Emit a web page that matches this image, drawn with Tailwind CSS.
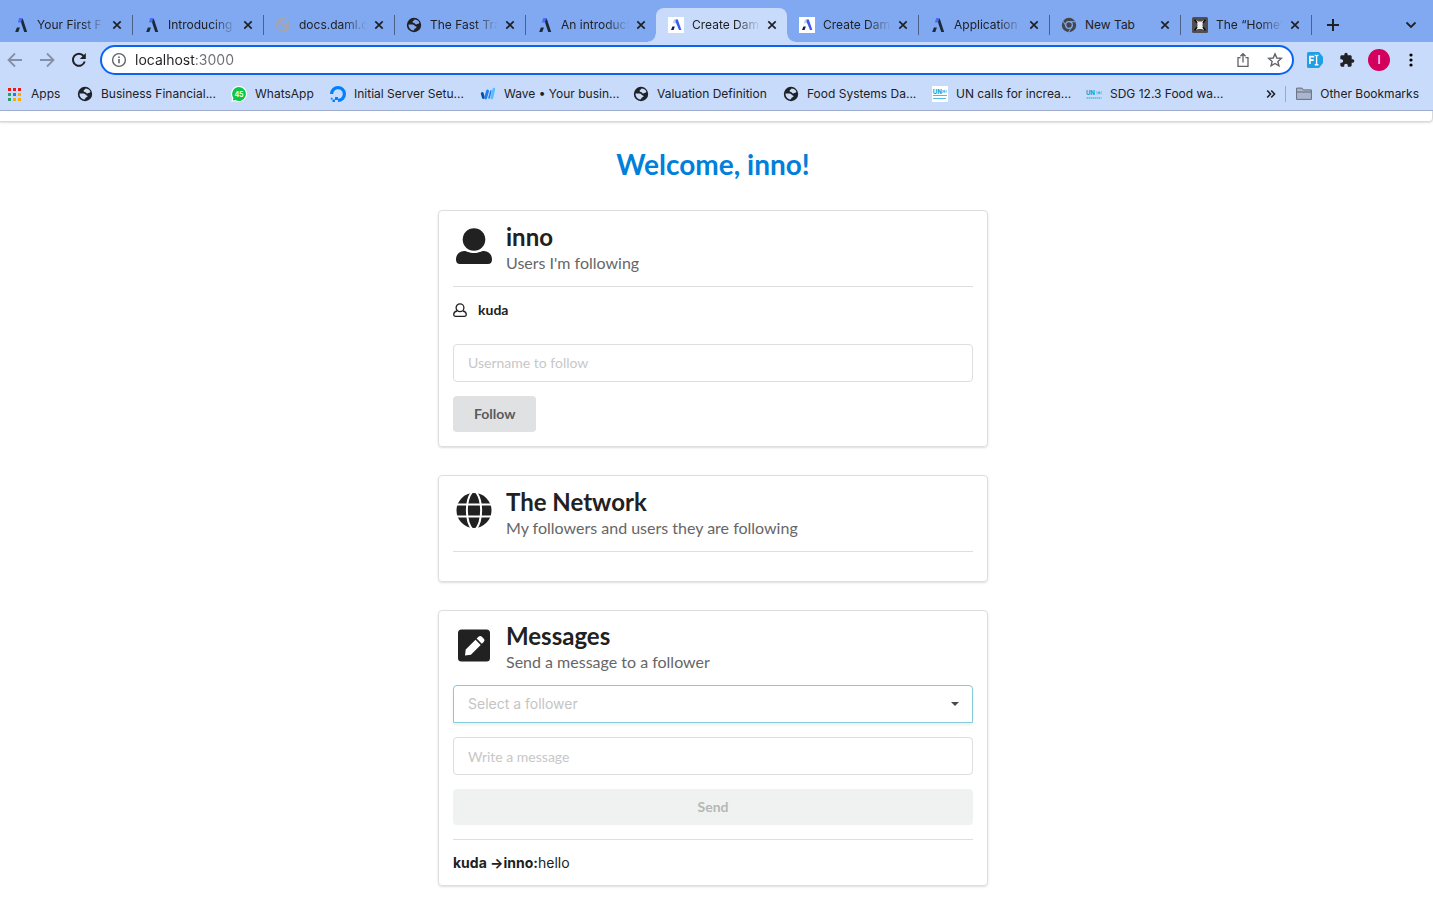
<!DOCTYPE html>
<html lang="en">
<head>
<meta charset="utf-8">
<meta name="viewport" content="width=device-width, initial-scale=1">
<title>Create Daml App</title>
<script src="https://cdn.jsdelivr.net/npm/@tailwindcss/browser@4"></script>
</head>
<body class="min-h-screen bg-white font-['Inter',sans-serif] text-[#202124]">

<svg class="hidden" xmlns="http://www.w3.org/2000/svg">
  <symbol id="close" viewBox="0 0 10 10"><path d="M1.3 1.3l7.4 7.4M8.7 1.3L1.3 8.7" fill="none" stroke="#202124" stroke-width="1.7"/></symbol>
  <symbol id="daml" viewBox="0 0 16 16"><path d="M6.200 1h3.400l1 4.600H4.900z" fill="#4a6cf5"/><path d="M8.600 3l1.200-1.200L14.200 15h-3L8.200 6z" fill="#1c2b3a"/><path d="M3.900 10.400h3L5.300 15H2.200z" fill="#1c2b3a"/></symbol>
  <symbol id="damlbox" viewBox="0 0 16 16"><path d="M0 0h16v16H0z" fill="#fff"/><path d="M6 2.600h3.400l.4 3.600H4.800z" fill="#c3cffb"/><path d="M7.600 2.600h2.200L13.400 13H11L7.700 5z" fill="#3a5cf0"/><path d="M4.400 9.600h2.400L5.600 13H3z" fill="#101d55"/></symbol>
  <symbol id="globe" viewBox="0 0 16 16"><circle cx="8" cy="8" r="7.200" fill="currentColor"/><path d="M8.600 2.500c2 0 3.700 1.100 4.700 2.700.1 1-.6 1.700-1.700 1.700-.7 0-.9.600-1.600.6-.9 0-.7-1-1.500-1.200-.9-.2-1.900-.5-1.900-1.500 0-.7.700-.8 1.200-1.200.4-.3.300-.9.800-1.100z" fill="var(--land,#81a9f1)"/><path d="M2.500 7.600c1.600-.1 3.700-.2 5 .2 1 .3 1 1.300 1.900 1.500.8.200 1.300.5 1.100 1.200-.3.900-1.600.7-2 1.500-.3.700-.4 1.400-1.300 1.500-2.700-.4-4.800-2.900-4.700-5.900z" fill="var(--land,#81a9f1)"/></symbol>
  <symbol id="folder" viewBox="0 0 16 14"><path d="M.6 1.100h5.400l1.400 1.800h8v9.500H.6z" fill="#aab6d0" stroke="#666d79"/><path d="M1 5h14" stroke="#666d79"/></symbol>
</svg>

<header>
  <!-- Tab strip -->
  <div class="flex h-[42px] items-end bg-[#81a9f1] pl-px text-xs">
    <div role="tablist" class="flex min-w-0 flex-1">
      <div role="tab" class="flex h-[34px] w-[131px] items-center pl-3">
        <svg class="size-4 shrink-0"><use href="#daml"/></svg>
        <span class="ml-2 w-[68px] whitespace-nowrap [mask-image:linear-gradient(90deg,#000_65%,transparent)]">Your First F</span>
        <button aria-label="Close tab" class="ml-[7px]"><svg class="size-2.5"><use href="#close"/></svg></button>
        <span class="-mr-px ml-auto h-5 w-px bg-[#4b6189]"></span>
      </div>
      <div role="tab" class="flex h-[34px] w-[131px] items-center pl-3">
        <svg class="size-4 shrink-0"><use href="#daml"/></svg>
        <span class="ml-2 w-[68px] whitespace-nowrap [mask-image:linear-gradient(90deg,#000_65%,transparent)]">Introducing</span>
        <button aria-label="Close tab" class="ml-[7px]"><svg class="size-2.5"><use href="#close"/></svg></button>
        <span class="-mr-px ml-auto h-5 w-px bg-[#4b6189]"></span>
      </div>
      <div role="tab" class="flex h-[34px] w-[131px] items-center pl-3">
        <svg class="size-4 shrink-0 text-[#a3a6ae]"><use href="#globe"/></svg>
        <span class="ml-2 w-[68px] whitespace-nowrap [mask-image:linear-gradient(90deg,#000_65%,transparent)]">docs.daml.c</span>
        <button aria-label="Close tab" class="ml-[7px]"><svg class="size-2.5"><use href="#close"/></svg></button>
        <span class="-mr-px ml-auto h-5 w-px bg-[#4b6189]"></span>
      </div>
      <div role="tab" class="flex h-[34px] w-[131px] items-center pl-3">
        <svg class="size-4 shrink-0"><use href="#globe"/></svg>
        <span class="ml-2 w-[68px] whitespace-nowrap [mask-image:linear-gradient(90deg,#000_65%,transparent)]">The Fast Tra</span>
        <button aria-label="Close tab" class="ml-[7px]"><svg class="size-2.5"><use href="#close"/></svg></button>
        <span class="-mr-px ml-auto h-5 w-px bg-[#4b6189]"></span>
      </div>
      <div role="tab" class="flex h-[34px] w-[131px] items-center pl-3">
        <svg class="size-4 shrink-0"><use href="#daml"/></svg>
        <span class="ml-2 w-[68px] whitespace-nowrap [mask-image:linear-gradient(90deg,#000_65%,transparent)]">An introduct</span>
        <button aria-label="Close tab" class="ml-[7px]"><svg class="size-2.5"><use href="#close"/></svg></button>
      </div>
      <div role="tab" aria-selected="true" class="relative flex h-[34px] w-[131px] items-center rounded-t-lg bg-[#c9dbfb] pl-3">
        <span class="absolute bottom-0 -left-2 size-2 bg-[radial-gradient(circle_at_0_0,transparent_7px,#c9dbfb_8px)]"></span>
        <span class="absolute -right-2 bottom-0 size-2 bg-[radial-gradient(circle_at_100%_0,transparent_7px,#c9dbfb_8px)]"></span>
        <svg class="size-4 shrink-0"><use href="#damlbox"/></svg>
        <span class="ml-2 w-[68px] whitespace-nowrap [mask-image:linear-gradient(90deg,#000_65%,transparent)]">Create Dam</span>
        <button aria-label="Close tab" class="ml-[7px]"><svg class="size-2.5"><use href="#close"/></svg></button>
      </div>
      <div role="tab" class="flex h-[34px] w-[131px] items-center pl-3">
        <svg class="size-4 shrink-0"><use href="#damlbox"/></svg>
        <span class="ml-2 w-[68px] whitespace-nowrap [mask-image:linear-gradient(90deg,#000_65%,transparent)]">Create Dam</span>
        <button aria-label="Close tab" class="ml-[7px]"><svg class="size-2.5"><use href="#close"/></svg></button>
        <span class="-mr-px ml-auto h-5 w-px bg-[#4b6189]"></span>
      </div>
      <div role="tab" class="flex h-[34px] w-[131px] items-center pl-3">
        <svg class="size-4 shrink-0"><use href="#daml"/></svg>
        <span class="ml-2 w-[68px] whitespace-nowrap [mask-image:linear-gradient(90deg,#000_65%,transparent)]">Application</span>
        <button aria-label="Close tab" class="ml-[7px]"><svg class="size-2.5"><use href="#close"/></svg></button>
        <span class="-mr-px ml-auto h-5 w-px bg-[#4b6189]"></span>
      </div>
      <div role="tab" class="flex h-[34px] w-[131px] items-center pl-3">
        <svg class="size-4 shrink-0" viewBox="0 0 16 16"><circle cx="8" cy="8" r="7.200" fill="#43474c"/><circle cx="8" cy="8" r="3.300" fill="none" stroke="#81a9f1" stroke-width="1.300"/><path d="M8 4.700h6.300M5.200 9.600L2.100 4.200M10.800 9.600l-3.100 5.400" stroke="#81a9f1" stroke-width="1"/></svg>
        <span class="ml-2 w-[68px] whitespace-nowrap">New Tab</span>
        <button aria-label="Close tab" class="ml-[7px]"><svg class="size-2.5"><use href="#close"/></svg></button>
        <span class="-mr-px ml-auto h-5 w-px bg-[#4b6189]"></span>
      </div>
      <div role="tab" class="flex h-[34px] w-[131px] items-center pl-3">
        <svg class="size-4 shrink-0" viewBox="0 0 16 16"><rect width="16" height="16" rx="1.500" fill="#4f4f51"/><path d="M4 3l2 1.500h4L12 3l-1.500 4v2L12 13l-2-1H6l-2 1 1.500-4V7z" fill="#f0f0f0"/><path d="M2.500 2.500L5 6M13.500 2.500L11 6M2.500 13.500L5 10M13.500 13.500L11 10" fill="none" stroke="#151515" stroke-width="1.600"/></svg>
        <span class="ml-2 w-[67px] whitespace-nowrap [mask-image:linear-gradient(90deg,#000_65%,transparent)]">The “Home”</span>
        <button aria-label="Close tab" class="ml-[7px]"><svg class="size-2.5"><use href="#close"/></svg></button>
        <span class="-mr-px ml-auto h-5 w-px bg-[#4b6189]"></span>
      </div>
      <button aria-label="New tab" class="ml-4 h-[34px]"><svg class="size-3" viewBox="0 0 12 12"><path d="M6 0v12M0 6h12" stroke="#202124" stroke-width="2"/></svg></button>
    </div>
    <button aria-label="Search tabs" class="mr-4 h-[34px]"><svg class="h-2 w-3" viewBox="0 0 12 8"><path d="M1.500 1.500L6 6l4.500-4.500" fill="none" stroke="#202124" stroke-width="1.800"/></svg></button>
  </div>

  <!-- Toolbar -->
  <div class="flex h-9 items-center bg-[#c9dbfb] pr-5 pl-[7px]">
    <button aria-label="Back"><svg class="size-4" viewBox="0 0 16 16"><path d="M8 1.500L1.500 8 8 14.500M1.500 8h13.500" fill="none" stroke="#858fa8" stroke-width="1.800"/></svg></button>
    <button aria-label="Forward" class="ml-4"><svg class="size-4" viewBox="0 0 16 16"><path d="M8 1.500L14.500 8 8 14.500M14.500 8H1" fill="none" stroke="#858fa8" stroke-width="1.800"/></svg></button>
    <button aria-label="Reload" class="ml-4"><svg class="size-4" viewBox="0 0 16 16"><path d="M13.700 9.500A6 6 0 1112.600 4" fill="none" stroke="#202124" stroke-width="2"/><path d="M14.800 1v6H8.800z" fill="#202124"/></svg></button>
    <div class="ml-[13px] flex h-[30px] flex-1 items-center rounded-full border-2 border-[#0b63f0] bg-white pr-[9px] pl-[9px]">
      <svg class="size-4 shrink-0" viewBox="0 0 16 16"><circle cx="8" cy="8" r="6.400" fill="none" stroke="#5f6368" stroke-width="1.400"/><path d="M8 7v4.300M8 4.500V6" stroke="#5f6368" stroke-width="1.600"/></svg>
      <input aria-label="Address" value="localhost:3000" class="ml-2 min-w-0 flex-1 bg-[linear-gradient(90deg,#202124_60px,#6a6e73_60px)] bg-clip-text text-sm text-transparent outline-none">
      <button aria-label="Share"><svg class="size-4" viewBox="0 0 16 16"><path d="M5.500 5.700H3v8.600h10V5.700h-2.500M8 10.500V2M5.400 4.300L8 1.700l2.600 2.600" fill="none" stroke="#5f6368" stroke-width="1.300"/></svg></button>
      <button aria-label="Bookmark this page" class="ml-4"><svg class="size-4" viewBox="0 0 16 16"><path d="M8 1.900l1.800 4.100 4.500.4-3.400 3 1 4.400L8 11.500l-3.900 2.300 1-4.400-3.400-3 4.500-.4z" fill="none" stroke="#5f6368" stroke-width="1.400"/></svg></button>
    </div>
    <button aria-label="Text extension" class="ml-[13px]"><svg class="size-4" viewBox="0 0 16 16"><path d="M0 1.500A1.500 1.500 0 011.500 0H12l4 5v6l-4 5H1.500A1.500 1.500 0 010 14.500z" fill="#1f9fe6"/><path d="M2.900 12V4.600h4.300M2.900 8.200h3.800" fill="none" stroke="#fff" stroke-width="1.700"/><path d="M7.700 3.200c1.200 0 1.900.4 1.900 1.200v7.200c0 .8-.7 1.200-1.900 1.200M11.500 3.200c-1.200 0-1.900.4-1.900 1.200M11.500 12.800c-1.200 0-1.900-.4-1.900-1.200" fill="none" stroke="#fff" stroke-width="1.300"/></svg></button>
    <button aria-label="Extensions" class="ml-4"><svg class="size-4" viewBox="0 0 24 24"><path d="M20.500 11H19V7c0-1.100-.9-2-2-2h-4V3.500a2.500 2.500 0 00-5 0V5H4c-1.100 0-2 .9-2 2v3.800h1.500c1.500 0 2.700 1.200 2.700 2.700S5 16.200 3.500 16.200H2V20c0 1.100.9 2 2 2h3.800v-1.500c0-1.500 1.200-2.700 2.700-2.700s2.700 1.200 2.700 2.700V22H17c1.100 0 2-.9 2-2v-4h1.500a2.500 2.500 0 000-5z" fill="#202124"/></svg></button>
    <button aria-label="Profile" class="ml-[13px] size-[22px] rounded-full bg-[#d3015b] text-xs text-white">I</button>
    <button aria-label="Menu" class="ml-[19px]"><svg class="h-4 w-1" viewBox="0 0 4 16"><circle cx="2" cy="3" r="1.600"/><circle cx="2" cy="8" r="1.600"/><circle cx="2" cy="13" r="1.600"/></svg></button>
  </div>

  <!-- Bookmarks bar -->
  <nav class="flex h-[33px] items-center border-b border-[#a3afd0] bg-[#c9dbfb] pr-3.5 pl-2 text-xs whitespace-nowrap [--land:#c9dbfb]">
    <a href="#" class="flex w-[69px] shrink-0 items-center"><svg class="mr-2.5 size-[13px]" viewBox="0 0 13 13"><path d="M0 0h3v3H0zM5 0h3v3H5zM10 0h3v3h-3z" fill="#f01818"/><path d="M0 5h3v3H0zM0 10h3v3H0z" fill="#1fa463"/><path d="M5 5h3v3H5z" fill="#1a7cf9"/><path d="M10 5h3v3h-3zM5 10h3v3H5zM10 10h3v3h-3z" fill="#f9ab00"/></svg>Apps</a>
    <a href="#" class="flex w-[154px] shrink-0 items-center"><svg class="mr-2 size-4"><use href="#globe"/></svg>Business Financial...</a>
    <a href="#" class="flex w-[99px] shrink-0 items-center"><svg class="mr-2 size-4" viewBox="0 0 16 16"><path d="M8 0a8 8 0 11-3.900 15L.3 16l.9-3.900A8 8 0 018 0z" fill="#fff"/><path d="M8 1.100a6.900 6.900 0 11-3.600 12.800l-2.600.7.600-2.700A6.900 6.900 0 018 1.100z" fill="#0ac843"/><text x="8" y="10.500" text-anchor="middle" font-size="7" font-weight="700" fill="#fff">45</text></svg>WhatsApp</a>
    <a href="#" class="flex w-[150px] shrink-0 items-center"><svg class="mr-2 size-4" viewBox="0 0 16 16"><path d="M1.600 8a6.400 6.400 0 116.400 6.400" fill="none" stroke="#0080ff" stroke-width="3.200"/><path d="M5 11h3v3H5zM2.500 13.500H5V16H2.500zM.8 11.800h1.700v1.700H.8z" fill="#0080ff"/></svg>Initial Server Setu...</a>
    <a href="#" class="flex w-[153px] shrink-0 items-center"><svg class="mr-2 size-4" viewBox="0 0 16 16" stroke-linecap="round"><path d="M2.200 7.500l1.200 4" stroke="#0a4f9e" stroke-width="2.800"/><path d="M7.600 5L5.600 12" stroke="#1c7ff2" stroke-width="2.800"/><path d="M10.900 5L9 12" stroke="#1c7ff2" stroke-width="1.600"/><path d="M13.800 3.200L11.800 12" stroke="#5bbcff" stroke-width="2.800"/></svg>Wave • Your busin...</a>
    <a href="#" class="flex w-[150px] shrink-0 items-center"><svg class="mr-2 size-4"><use href="#globe"/></svg>Valuation Definition</a>
    <a href="#" class="flex w-[149px] shrink-0 items-center"><svg class="mr-2 size-4"><use href="#globe"/></svg>Food Systems Da...</a>
    <a href="#" class="flex w-[154px] shrink-0 items-center"><svg class="mr-2 size-4" viewBox="0 0 16 16"><path d="M0 0h16v16H0z" fill="#fff"/><text x=".8" y="7.600" font-size="6" font-weight="800" fill="#16a5da">UN</text><circle cx="12.300" cy="5.400" r="1.300" fill="#5fc0e6"/><path d="M10.400 4v3M14.300 4v3" stroke="#9bd7ef"/><path d="M1 9.500h14M1 12.500h13" stroke="#4fbbe3" stroke-width="1"/></svg>UN calls for increa...</a>
    <a href="#" class="flex min-w-0 flex-1 items-center"><svg class="mr-2 size-4" viewBox="0 0 16 16"><text x="0" y="9" font-size="6" font-weight="800" fill="#16a5da">UN</text><circle cx="13" cy="6.800" r="1.500" fill="#4fbbe3"/><path d="M10.800 5v3.500M15.300 5v3.500" stroke="#7cc9ea"/><path d="M.5 12h15" stroke="#4fbbe3" stroke-width="1.300" stroke-dasharray="1.500 .5"/></svg>SDG 12.3 Food wa...</a>
    <button aria-label="More bookmarks"><svg class="size-2.5" viewBox="0 0 10 10"><path d="M1.200 1.500L4.500 5 1.200 8.500M5.200 1.500L8.500 5 5.200 8.500" fill="none" stroke="#202124" stroke-width="1.600"/></svg></button>
    <span class="ml-[9px] h-4 w-px bg-[#9aa9c9]"></span>
    <a href="#" class="ml-2.5 flex items-center"><svg class="mr-2 h-3.5 w-4"><use href="#folder"/></svg>Other Bookmarks</a>
  </nav>
</header>

<!-- Bottom edge of the app's menu bar -->
<div class="h-[11px] rounded-br border-r border-b border-[#d9d9da] shadow-[0_1px_2px_0_rgba(34,36,38,0.15)]"></div>

<main class="pr-[7px] font-['Lato',sans-serif] text-sm text-[#212121]">
  <h1 class="pt-6 text-center text-[28px] leading-9 font-bold text-[#0080db]">Welcome, inno!</h1>

  <div class="mx-auto mt-7 flex max-w-[550px] flex-col gap-7 pb-3.5">
    <section class="rounded border border-[#dededf] px-3.5 pt-3 pb-3.5 shadow-[0_1px_2px_0_rgba(34,36,38,0.15)]">
      <div class="flex h-[63px] gap-[13px]">
        <svg class="mt-1 ml-0.5 size-[38px] shrink-0" viewBox="0 0 38 38" fill="#212121"><circle cx="19" cy="12.500" r="11.300"/><path d="M9 24c3 0 4.500 2 10 2s7-2 10-2c5 0 8 4 8 8.500 0 3-1.500 4.500-4 4.500H5c-2.500 0-4-1.500-4-4.500C1 28 4 24 9 24z"/></svg>
        <div><h2 class="text-2xl leading-7 font-bold">inno</h2><p class="text-base leading-6 text-[#666]">Users I'm following</p></div>
      </div>
      <hr class="border-[#dededf]">
      <div class="mt-[13px] flex items-center leading-5 font-bold"><svg class="mr-[11px] size-3.5" viewBox="0 0 14 14" fill="none" stroke="#212121" stroke-width="1.300"><circle cx="7" cy="4.700" r="3.900"/><path d="M4 8C1.800 8.500.7 9.800.7 11.600c0 1 .6 1.700 1.500 1.700h9.600c.9 0 1.500-.7 1.500-1.700 0-1.800-1.100-3.100-3.300-3.600"/></svg>kuda</div>
      <input aria-label="Username to follow" placeholder="Username to follow" class="mt-6 block h-[38px] w-full rounded border border-[#dededf] px-3.5 pb-0.5 placeholder:text-[#c7c7c7]">
      <button class="mt-3.5 block h-9 rounded bg-[#e0e1e2] px-[21px] font-bold text-[#5a5b5b]">Follow</button>
    </section>

    <section class="rounded border border-[#dededf] px-3.5 pt-3 pb-3.5 shadow-[0_1px_2px_0_rgba(34,36,38,0.15)]">
      <div class="flex h-[63px] gap-[13px]">
        <svg class="mt-1 ml-0.5 size-[38px] shrink-0" viewBox="0 0 38 38"><circle cx="19" cy="18.500" r="17.500" fill="#212121"/><path d="M0 12.500h38M0 24.500h38" stroke="#fff" stroke-width="2"/><path d="M19-2.500C9.500 7 9.500 30 19 39.500M19-2.500C28.500 7 28.500 30 19 39.500" fill="none" stroke="#fff" stroke-width="2"/></svg>
        <div><h2 class="text-2xl leading-7 font-bold">The Network</h2><p class="text-base leading-6 text-[#666]">My followers and users they are following</p></div>
      </div>
      <hr class="mb-[15px] border-[#dededf]">
    </section>

    <section class="rounded border border-[#dededf] px-3.5 pt-[11px] pb-3.5 shadow-[0_1px_2px_0_rgba(34,36,38,0.15)]">
      <div class="flex h-[63px] gap-[13px]">
        <svg class="mt-[5px] ml-0.5 size-[38px] shrink-0" viewBox="0 0 38 38"><rect x="3" y="2.500" width="32" height="32" rx="3.500" fill="#212121"/><path d="M10 28.500l.7-6 9.800-9.800 5.200 5.200-9.800 9.800zM21.600 11.600l1.900-1.900c1-1 2.200-1 3.100-.1l2.200 2.200c.9.900.9 2.100-.1 3.100l-1.900 1.900z" fill="#fff"/></svg>
        <div><h2 class="text-2xl leading-7 font-bold">Messages</h2><p class="text-base leading-6 text-[#666]">Send a message to a follower</p></div>
      </div>
      <div class="relative">
        <select aria-label="Select a follower" class="block h-[38px] w-full appearance-none rounded-t border border-[#85cbdb] bg-white px-3.5 font-['Inter',sans-serif] text-[#c4c4c4] shadow-[0_2px_3px_0_rgba(34,36,38,0.08)]"><option>Select a follower</option></select>
        <svg class="pointer-events-none absolute top-[17px] right-3.5 h-1 w-2" viewBox="0 0 8 4"><path d="M0 0h8L4 4z" fill="#4a4a4a"/></svg>
      </div>
      <input aria-label="Write a message" placeholder="Write a message" class="mt-3.5 block h-[38px] w-full rounded border border-[#dededf] px-3.5 placeholder:text-[#c7c7c7]">
      <button disabled class="mt-3.5 block h-9 w-full rounded bg-[#f0f2f1] font-bold text-[#b5b7b6]">Send</button>
      <hr class="mt-3.5 border-[#dededf]">
      <p class="mt-3.5 font-['Inter',sans-serif] leading-[17px]"><strong class="font-bold">kuda →inno:</strong>hello</p>
    </section>
  </div>
</main>
</body>
</html>
